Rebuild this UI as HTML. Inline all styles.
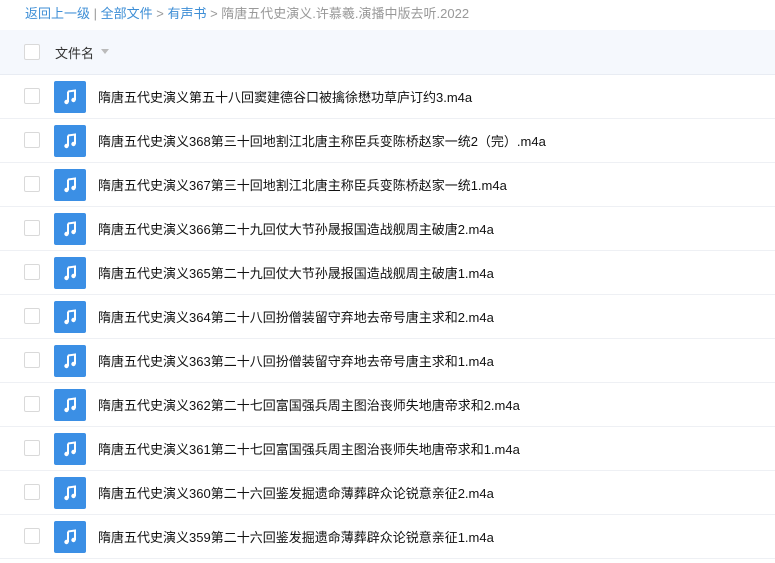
<!DOCTYPE html>
<html><head><meta charset="utf-8"><style>
body{margin:0;width:775px;height:563px;overflow:hidden;background:#fff;font-family:"Liberation Sans","Noto Sans CJK SC",sans-serif;}
.bc{position:absolute;left:25px;top:5px;font-size:13px;color:#999;line-height:18px}
.bc a{color:#3d8ed6;text-decoration:none}
.hd{position:absolute;left:0;top:30px;width:775px;height:44px;background:#f5f8fd;border-bottom:1px solid #e8ecf3}
.cb{position:absolute;left:24px;width:14px;height:14px;border:1px solid #d9d9d9;border-radius:2px;background:#fff}
.hd .cb{top:14px}
.hd span{position:absolute;left:55px;top:13px;font-size:13px;color:#333}
.tri{position:absolute;left:101px;top:19px;width:0;height:0;border-left:4px solid transparent;border-right:4px solid transparent;border-top:5px solid #bbb}
.row{position:absolute;left:0;width:775px;height:43px;border-bottom:1px solid #eef0f4}
.row .cb{top:13px}
.ic{position:absolute;left:54px;top:6px;width:32px;height:32px;background:#3b8fe5;border-radius:2px}
.ic svg{position:absolute;left:0;top:0}
.nm{position:absolute;left:98px;top:14px;font-size:13px;color:#111;white-space:nowrap;line-height:18px}
</style></head><body>
<div class="bc"><a>返回上一级</a> | <a>全部文件</a> &gt; <a>有声书</a> &gt; 隋唐五代史演义.许慕羲.演播中版去听.2022</div>
<div class="hd"><div class="cb"></div><span>文件名</span><div class="tri"></div></div>
<div id="rows"></div>
<script>
var n=["隋唐五代史演义第五十八回窦建德谷口被擒徐懋功草庐订约3.m4a","隋唐五代史演义368第三十回地割江北唐主称臣兵变陈桥赵家一统2（完）.m4a","隋唐五代史演义367第三十回地割江北唐主称臣兵变陈桥赵家一统1.m4a","隋唐五代史演义366第二十九回仗大节孙晟报国造战舰周主破唐2.m4a","隋唐五代史演义365第二十九回仗大节孙晟报国造战舰周主破唐1.m4a","隋唐五代史演义364第二十八回扮僧装留守弃地去帝号唐主求和2.m4a","隋唐五代史演义363第二十八回扮僧装留守弃地去帝号唐主求和1.m4a","隋唐五代史演义362第二十七回富国强兵周主图治丧师失地唐帝求和2.m4a","隋唐五代史演义361第二十七回富国强兵周主图治丧师失地唐帝求和1.m4a","隋唐五代史演义360第二十六回鉴发掘遗命薄葬辟众论锐意亲征2.m4a","隋唐五代史演义359第二十六回鉴发掘遗命薄葬辟众论锐意亲征1.m4a"];
var h="";
n.forEach(function(t,i){h+='<div class="row" style="top:'+(75+i*44)+'px"><div class="cb"></div><div class="ic"><svg width="32" height="32"><path d="M14 10.5 L21 9.5 V19" stroke="#fff" stroke-width="2" fill="none"/><path d="M14 10.5 V21" stroke="#fff" stroke-width="2" fill="none"/><circle cx="12.5" cy="21" r="2.2" fill="#fff"/><circle cx="19.5" cy="19" r="2.2" fill="#fff"/></svg></div><div class="nm">'+t+'</div></div>'});
document.getElementById("rows").innerHTML=h;
</script>
</body></html>
